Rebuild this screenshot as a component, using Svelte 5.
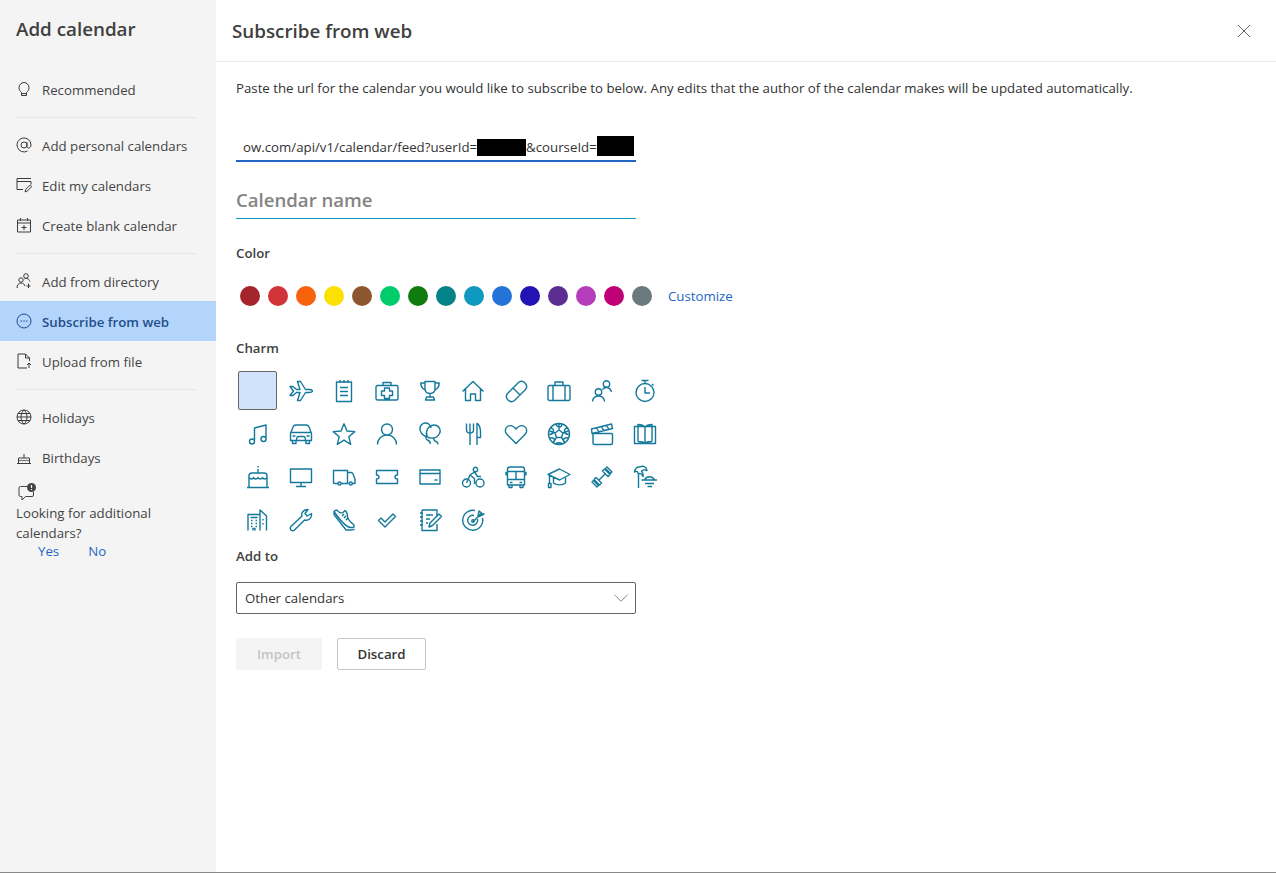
<script>
	const circle = (cx, cy, r) => `M${cx - r} ${cy}a${r} ${r} 0 1 0 ${2 * r} 0a${r} ${r} 0 1 0 ${-2 * r} 0`;

	const navIcons = {
		bulb: 'M5.500 11.500C4 10.300 3 8.800 3 6.800 3 3.900 5.200 1.500 8 1.500s5 2.400 5 5.300c0 2-1 3.500-2.500 4.700v3h-5zM5.500 12.500h5',
		at: circle(8, 8, 3) + 'M11 5v4.500c0 2.500 4 2 4-1.500A7 7 0 1 0 11.500 14',
		edit: 'M15 1.500H1v11h6M1 4.500h14M15 4.500v3M9 15l.8-2.600 4.400-4.400 1.600 1.600-4.400 4.400z',
		blank: 'M1.500 3h13v12h-13zM1.500 6h13M4.500 1v3M11.500 1v3M8 8v5M5.500 10.500h5',
		people: circle(10, 3, 2.300) + circle(5, 7, 2.200) + 'M1 15c0-3 1.600-5 4-5s3.500 1.500 4 3M8.500 5.800c2-.8 4.500-.3 5.500 2.700M12.500 10.500v4.500M10.500 13h4',
		web: circle(8, 8, 7) + 'M4.500 8h1.500M7.300 8h1.500M10 8h1.500',
		upload: 'M9.500 1H2v14h9M9.500 1v4h4M9.500 1l4 4v3M13 15v-5M11 12l2-2 2 2',
		globe: circle(8, 8, 7) + 'M1 8h14M1.800 4.500h12.400M1.800 11.500h12.400M8 1c-4 3.500-4 10.500 0 14M8 1c4 3.500 4 10.500 0 14',
		cake: 'M1 14.500h14M2.500 14.500V9h11v5.500M2.500 11c1.500 1 2 1 2.800 0 .8 1 2 1 2.700 0 .8 1 2 1 2.700 0 .8 1 1.300 1 2.800 0M8 9V5'
	};

	const charms = [
		{ name: 'none' },
		{ name: 'plane', d: 'M1 7.500l3.500 4.500L1 16.500h3l3.500-3H11L8.500 21.500h3l5-8H20c2 0 3.500-.8 3.500-1.500S22 10.500 20 10.500h-3.500l-5-8h-3L11 10.500H7.500l-3.500-3z' },
		{ name: 'notes', d: 'M4.500 3h15v19.500h-15zM8 1v3M12 1v3M16 1v3M8 8.500h8M8 12.500h8M8 16.500h8' },
		{ name: 'medkit', d: 'M2.500 6.500h19a1.500 1.500 0 0 1 1.500 1.500v11.500a1.500 1.500 0 0 1-1.500 1.500h-19A1.500 1.500 0 0 1 1 19.500V8a1.500 1.500 0 0 1 1.500-1.500zM8 6.500V3.500h8v3M9.500 9h5v3h3v4.500h-3v3h-5v-3h-3V12h3z' },
		{ name: 'trophy', d: 'M7 2.500h10v7c0 3-2 5-5 5s-5-2-5-5zM7 4H2.800c0 3.500 1.700 6 4.700 7M17 4h4.200c0 3.500-1.700 6-4.700 7M12 14.500V18M8.500 18h7l1 3h-9z' },
		{ name: 'home', d: 'M1.500 12.500L12 2.500l10.500 10M4.500 10v11.500h5V15h5v6.500h5V10' },
		{ name: 'bandage', d: 'M3.500 14.500L14.500 3.500a5 5 0 0 1 7 7L10.500 21.500a5 5 0 0 1-7-7zM9 9l7 7M14.500 9.500h.1M12 7.500h.1M16.500 11.500h.1' },
		{ name: 'case', d: 'M2.500 6.500h19A1.500 1.500 0 0 1 23 8v12a1.500 1.500 0 0 1-1.500 1.500h-19A1.500 1.500 0 0 1 1 20V8a1.500 1.500 0 0 1 1.500-1.500zM8 6.500V3h8v3.500M6 6.500v15M18 6.500v15' },
		{ name: 'team', d: circle(16.500, 5, 3.200) + circle(8.500, 13, 3.200) + 'M2.500 22.500c0-3 2.500-5.500 6-5.500s6 2.500 6 5.500M12.500 10.500c1-1.500 2.500-2 4-2s4 1 5 4.500' },
		{ name: 'timer', d: circle(12, 13.500, 9) + 'M12 8v6h5M8.500 1.500h7M12 1.500v3M19 5l1.500 1.500' },
		{ name: 'music', d: circle(6, 19.500, 2.500) + circle(17.500, 17, 2.500) + 'M8.500 19.500V6l11.500-3v14' },
		{ name: 'car', d: 'M1.500 11.500l2.500-6.500C4.500 3.500 5.500 3 7 3h10c1.500 0 2.500.5 3 2l2.500 6.500v7h-21zM3.500 18.500v3h3.500v-3M17 18.500v3h3.500v-3M2.500 10.500h19M7.500 18.500c0-2.500 1-4 2-4h5c1 0 2 1.500 2 4M3.500 14h3M17.500 14h3' },
		{ name: 'star', d: 'M12 1.800l3 7.200 7.800.6-6 5.100 1.900 7.600-6.700-4.100-6.700 4.100 1.900-7.600-6-5.100L9 9z' },
		{ name: 'person', d: circle(12, 7.500, 5.500) + 'M2.500 22.500c0-5.500 4-9.500 9.500-9.500s9.500 4 9.500 9.500' },
		{ name: 'balloons', d: 'M8.500 15C4.500 13 2 9.500 2 7a5.500 5.500 0 0 1 11-1M9 14.500c-1-3-1-5 .5-7.500 1.500-2.500 5.500-5 9-3.500S23 9 21.500 11.500c-1 2-3 4-6 4.500-2.500.4-5 0-6.500-1.500zM8.500 15c-1 1.500-.5 2.500 1 3s3 1.500 2.500 4M16 16c-.5 2 .5 3 2 3.500s2 1.500 2 3' },
		{ name: 'cutlery', d: 'M5.500 1.500V8c0 2 1.500 3 3.500 3s3.500-1 3.500-3V1.500M9 1.500V23M16 23V1.500c2 1 3.500 4 3.500 9v5H16' },
		{ name: 'heart', d: 'M12 21.500L3 12.500C.5 10 1 6 3.500 4.500 6 3 9.500 3.500 12 7c2.500-3.500 6-4 8.500-2.500S23.500 10 21 12.500z' },
		{ name: 'ball', d: circle(12, 12, 10.500) + 'M12 8l4 3-1.500 4.500h-5L8 11zM12 8V2M9.500 2c-.5 1 0 2.500 2.500 3s3-2 2.500-3M16 11l5-2M20.500 6c-2 0-3.500 1.500-3 3.500s2.500 3 4 3M14.500 15.500l3 4.500M21 16c-1.500-.5-4 0-4.500 1.500S17 20 18 20.500M9.500 15.500l-3 4.500M3 16c1.500-.5 4 0 4.500 1.500S7 20 6 20.500M8 11L3 9M3.500 6c2 0 3.500 1.500 3 3.500s-2.500 3-4 3M9 21.500c1-1 5-1 6 0' },
		{ name: 'clapper', d: 'M3 11.500h18.500a1 1 0 0 1 1 1V21a1.500 1.500 0 0 1-1.500 1.500H4.500A1.500 1.500 0 0 1 3 21zM2 11.500L1.500 7 21.500 2l1 4.500zM6.500 6l2.500 4M11.500 4.800l2.500 4M16.500 3.500l2.500 4' },
		{ name: 'book', d: 'M1.500 4.500h21v17h-21zM12 5.500v16M5 19.500V2.500c3 0 5.500 .5 7 3 1.500-2.500 4-3 7-3v17M5 19.500c3 0 5.500 0 7 2 1.500-2 4-2 7-2' },
		{ name: 'bday', d: 'M1 22.500h22M3 22.500V11c0-2 1.500-3 3-3h12c1.500 0 3 1 3 3v11.500M3 12.500c1.500 2 4 2 4.500 0 1 2 3.500 2 4.500 0 1 2 3.500 2 4.500 0 .5 2 3 2 4.500 0M12 8V4M12 1v1.500' },
		{ name: 'screen', d: 'M1.500 4h21v13.500h-21zM12 17.500v4M7 21.500h10' },
		{ name: 'truck', d: 'M5.500 18.500H2.500A1 1 0 0 1 1.500 17.500V5.500h14v13H9.500M15.500 7.500h3.500c1 0 1.500.5 2 1.500l2 5v4.500h-2.500M16.500 18.500h-1' + circle(7.500, 18.500, 1.500) + circle(18.800, 18.500, 1.500) },
		{ name: 'ticket', d: 'M1.500 5.500h21v4.500c-1.500 0-2.500.8-2.500 2s1 2 2.500 2v4.500h-21V14c1.500 0 2.500-.8 2.500-2s-1-2-2.500-2z' },
		{ name: 'card', d: 'M2 5h20v14H2zM2 8.500h20M16.500 15h3' },
		{ name: 'bike', d: circle(5.500, 18, 4) + circle(19, 18, 4) + circle(14.500, 4.500, 2.200) + 'M5.500 18L9 10l4.500-3 3 4.500H20M9 10l4.500 3.500v5.500' },
		{ name: 'bus', d: 'M6 2h12a2.500 2.500 0 0 1 2.500 2.500V20h-17V4.500A2.500 2.500 0 0 1 6 2zM3.500 6.500h17M3.500 14.500h17M12 6.500v8M3.500 7.500H2v3M20.500 7.500H22v3M5 20v2.500h3V20M16 20v2.500h3V20M6 17.500h2.500M15.500 17.500H18' },
		{ name: 'grad', d: 'M1 9.500L12.500 4 23 9.500 12.500 15zM6.500 12.500V18c3 2.500 9 2.500 12 0v-5.500M2.500 10.500v8M1.500 18.500h2.500v4H1.500z' },
		{ name: 'dumbbell', d: 'M8.500 15.500l7-7M12.500 6l5.500 5.500 2-2L14.500 4zM15.500 3.500l5 5 1.500-1.500-5-5zM6 12.500L11.500 18l-2 2L4 14.500zM3.500 15.500l5 5L7 22l-5-5z' },
		{ name: 'beach', d: 'M5.500 23V9M5.500 9C4.500 6 3 5.500 1.500 7c0-3 2.500-5.500 5.500-5 2.500-1.500 6.500-.5 7 3.500C12 4.500 9.500 5 8.500 6.500c1.500 1 2 2.500 1.500 5C8.500 9 7.500 7.500 5.500 9zM11.500 15a5.500 5.500 0 0 1 10 0M8.500 15H24M12 18.500h9M14.500 21.500h4.500' },
		{ name: 'city', d: 'M2 22.500V6.500h12v16M14 22.500V2l6.500 6v14.500M4.500 9.500h7M5 12.500h1.500M5 15.500h1.500M5 18.500h1.500M9.500 12.500H11M9.500 15.500H11M9.500 18.500H11M17 11v1.500M17 15v1.500M7 22.500v-2h2v2' },
		{ name: 'wrench', d: 'M2 18.500L13 8C12 4.500 14.500 1.500 19 1.500l-3 4 2 2.500 4.500-2.500c.5 4.500-2.500 7.500-7 6.500L5.500 22c-1 1-2.500.8-3.500 0s-1-2.500 0-3.500z' },
		{ name: 'shoe', d: 'M2 3.500c1-1 2.500-1.500 3.500-1 1 2 4 3 5.500 2l2-2c1.500 1 2.500 3 2.500 6 0 2 3.500 6 6 8 1 1 .5 3 0 3h-3C14 19 8 12 2 3.500zM2 6.500L14 22h5c1 0 3 0 3.500-1M10 8l2-2M12 10l2-2M14 12l2-2M2 3.500v3' },
		{ name: 'check', d: 'M3.500 12.500l2.500-2.500 4 4L18 6l2.500 2.500L10 19z' },
		{ name: 'task', d: 'M4 2h15v7M19 16v6.500H4V2M2 5h3M2 9h3M2 13h3M2 17h3M8 7h7M8 11h4M8 15h2M11 19l1-4 9-9 2.500 2.500-9 9z' },
		{ name: 'target', d: 'M14 2.500A10 10 0 1 0 21.500 10M13 7.500A5 5 0 1 0 16.500 11M12 14l8.500-9M17 8l1-5 2 1.500L21.500 6l1.500 0-5 2.500z' + circle(12, 13, 1.300) }
	];

	const swatches = ['#a4262c', '#d13438', '#f7630c', '#fce100', '#8e562e', '#00cc6a', '#107c10', '#038387', '#0f99bf', '#2473d7', '#2213b3', '#5c2e91', '#b43dbb', '#bf0077', '#69797e'];
</script>

{#snippet navIcon(name)}
	<svg class="nav-icon" viewBox="0 0 16 16" fill="none"><path d={navIcons[name]} /></svg>
{/snippet}

<div class="page">
	<aside class="sidebar">
		<h1>Add calendar</h1>
		<nav>
			<a class="item">{@render navIcon('bulb')}Recommended</a>
			<hr />
			<a class="item">{@render navIcon('at')}Add personal calendars</a>
			<a class="item">{@render navIcon('edit')}Edit my calendars</a>
			<a class="item">{@render navIcon('blank')}Create blank calendar</a>
			<hr />
			<a class="item">{@render navIcon('people')}Add from directory</a>
			<a class="item active">{@render navIcon('web')}Subscribe from web</a>
			<a class="item">{@render navIcon('upload')}Upload from file</a>
			<hr />
			<a class="item">{@render navIcon('globe')}Holidays</a>
			<a class="item">{@render navIcon('cake')}Birthdays</a>
		</nav>
		<div class="feedback">
			<svg class="feedback-icon" viewBox="0 0 20 18" fill="none">
				<path d="M10 3.500H3.500A1.500 1.500 0 0 0 2 5v7a1.500 1.500 0 0 0 1.500 1.500H5V17l3.500-3.500H15a1.500 1.500 0 0 0 1.500-1.500V9" />
				<circle cx="14.500" cy="4.500" r="4.500" class="dot" />
				<path d="M14.500 2v3M14.500 6v1" class="mark" />
			</svg>
			<p>Looking for additional calendars?</p>
			<div class="answers"><a>Yes</a><a>No</a></div>
		</div>
	</aside>

	<main class="panel">
		<header>
			<h2>Subscribe from web</h2>
			<svg class="close" viewBox="0 0 14 14" fill="none"><path d="M1 1l12 12M13 1L1 13" /></svg>
		</header>
		<div class="form">
			<p class="intro">Paste the url for the calendar you would like to subscribe to below. Any edits that the author of the calendar makes will be updated automatically.</p>

			<div class="url">ow.com/api/v1/calendar/feed?userId=<span class="redact one"></span>&amp;courseId=<span class="redact two"></span></div>
			<div class="name">Calendar name</div>

			<div class="label color-label">Color</div>
			<div class="swatches">
				{#each swatches as s}
					<span class="swatch" style="background: {s}"></span>
				{/each}
				<a class="customize">Customize</a>
			</div>

			<div class="label charm-label">Charm</div>
			<div class="charms">
				{#each charms as c}
					<div class="charm" class:selected={c.name === 'none'}>
						{#if c.d}
							<svg viewBox="0 0 24 24" fill="none"><path d={c.d} /></svg>
						{/if}
					</div>
				{/each}
			</div>

			<div class="label addto-label">Add to</div>
			<div class="select">
				<span>Other calendars</span>
				<svg viewBox="0 0 14 8" fill="none"><path d="M.5 .8L7 7.200 13.500 .8" /></svg>
			</div>

			<div class="buttons">
				<button class="import" disabled>Import</button>
				<button class="discard">Discard</button>
			</div>
		</div>
	</main>
</div>

<style>
	:global(body) {
		background: #fff;
	}

	.page {
		display: flex;
		height: 873px;
		box-sizing: border-box;
		border-bottom: 1px solid #888;
		font-family: 'Open Sans', 'Liberation Sans', sans-serif;
		font-size: 13.25px;
		color: #333;
		overflow: hidden;
	}

	.sidebar {
		width: 216px;
		flex: none;
		background: #f4f4f4;
		color: #444;
	}

	h1 {
		margin: 0;
		padding: 15px 16px 0;
		height: 70px;
		box-sizing: border-box;
		font-size: 18.8px;
		line-height: 28px;
		font-weight: 600;
		color: #404040;
	}

	.item {
		display: flex;
		align-items: center;
		height: 40px;
		padding-left: 16px;
		gap: 10px;
	}

	.item.active {
		box-sizing: border-box;
		margin: -1px 0 1px;
		padding-top: 2px;
		background: #b3d4fb;
		color: #1f4e8c;
		font-weight: 600;
	}

	.nav-icon {
		width: 16px;
		height: 16px;
		flex: none;
		margin-top: -3px;
		stroke: #3a3a3a;
		stroke-width: 1;
	}

	.active .nav-icon {
		stroke: #1f4e8c;
	}

	hr {
		margin: 7px 20px 8px 16px;
		border: 0;
		border-top: 1px solid #e6e6e6;
	}

	.feedback {
		padding: 5px 16px 0;
	}

	.feedback-icon {
		display: block;
		width: 20px;
		height: 18px;
		margin-left: 1px;
		stroke: #444;
	}

	.feedback-icon .dot {
		fill: #444;
		stroke: none;
	}

	.feedback-icon .mark {
		stroke: #fff;
		stroke-width: 1.200;
	}

	.feedback p {
		margin: 2px 0 0;
		line-height: 20px;
	}

	.answers {
		display: flex;
		gap: 29px;
		padding-left: 22px;
		line-height: 17px;
	}

	.answers a,
	.customize {
		color: #2266c4;
	}

	.panel {
		flex: 1;
		min-width: 0;
	}

	header {
		display: flex;
		align-items: center;
		justify-content: space-between;
		height: 62px;
		box-sizing: border-box;
		padding: 0 25px 0 16px;
		border-bottom: 1px solid #ebebeb;
	}

	h2 {
		margin: 0;
		font-size: 18.8px;
		font-weight: 600;
		color: #404040;
	}

	.close {
		width: 14px;
		height: 14px;
		stroke: #666;
		stroke-width: 1;
	}

	.form {
		padding: 0 20px;
	}

	.intro {
		margin: 0;
		padding-top: 16px;
		line-height: 20px;
	}

	.url {
		width: 400px;
		box-sizing: border-box;
		height: 36px;
		margin-top: 28px;
		padding: 11px 0 0 7px;
		line-height: 20px;
		border-bottom: 2px solid #2266c4;
		white-space: nowrap;
	}

	.redact {
		display: inline-block;
		background: #000;
		vertical-align: top;
	}

	.redact.one {
		width: 49px;
		height: 17px;
		margin-top: 2px;
	}

	.redact.two {
		width: 37px;
		height: 20px;
		margin-top: -1px;
	}

	.name {
		width: 400px;
		box-sizing: border-box;
		height: 33px;
		margin-top: 24px;
		font-size: 18.6px;
		font-weight: 600;
		line-height: 28px;
		color: #848484;
		border-bottom: 1px solid #0f99bf;
	}

	.label {
		font-weight: 600;
		line-height: 20px;
		color: #404040;
	}

	.color-label {
		margin-top: 24px;
	}

	.swatches {
		display: flex;
		align-items: center;
		gap: 8px;
		height: 20px;
		margin-top: 23px;
		padding-left: 4px;
	}

	.swatch {
		width: 20px;
		height: 20px;
		border-radius: 50%;
		flex: none;
	}

	.customize {
		margin-left: 8px;
	}

	.charm-label {
		margin-top: 32px;
	}

	.charms {
		display: grid;
		grid-template-columns: repeat(10, 43px);
		grid-auto-rows: 43px;
		margin-top: 11px;
		width: 430px;
	}

	.charm {
		display: flex;
		align-items: center;
		justify-content: center;
	}

	.charm svg {
		width: 24px;
		height: 24px;
		stroke: #14789a;
		stroke-width: 1.400;
		stroke-linejoin: round;
	}

	.charm.selected {
		width: 39px;
		height: 39px;
		box-sizing: border-box;
		margin: 2px 0 0 2px;
		background: #d0e3fb;
		border: 1px solid #666;
		border-radius: 2px;
	}

	.addto-label {
		margin-top: 5px;
	}

	.select {
		display: flex;
		align-items: center;
		justify-content: space-between;
		width: 400px;
		height: 32px;
		box-sizing: border-box;
		margin-top: 16px;
		padding: 0 7px 0 8px;
		border: 1px solid #666;
		border-radius: 2px;
	}

	.select svg {
		width: 14px;
		height: 8px;
		stroke: #888;
	}

	.buttons {
		display: flex;
		gap: 15px;
		margin-top: 24px;
	}

	button {
		height: 32px;
		box-sizing: border-box;
		padding: 0;
		border-radius: 2px;
		font: 600 13.25px 'Open Sans', 'Liberation Sans', sans-serif;
	}

	.import {
		width: 86px;
		background: #f4f4f4;
		border: 0;
		color: #c4c4c4;
	}

	.discard {
		width: 89px;
		background: #fff;
		border: 1px solid #c8c6c4;
		color: #333;
	}
</style>
